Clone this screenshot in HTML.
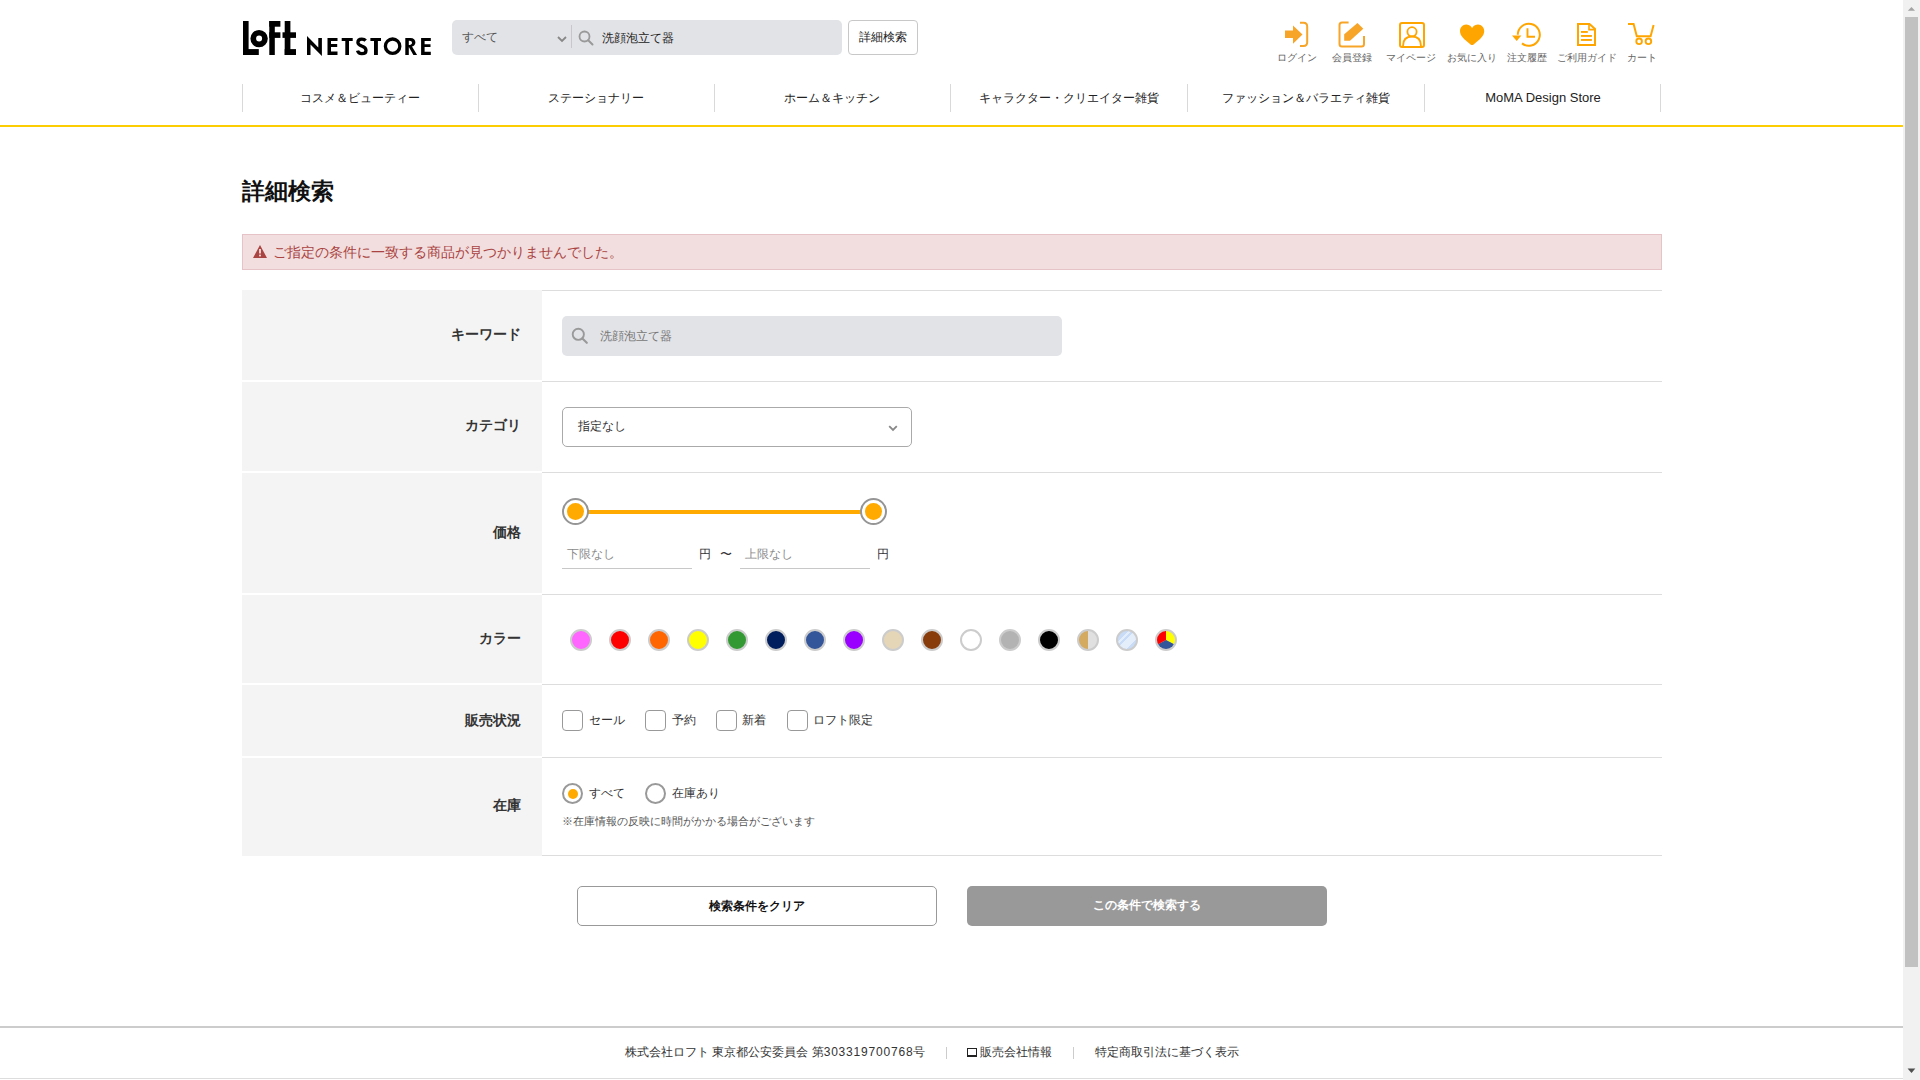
<!DOCTYPE html>
<html lang="ja">
<head>
<meta charset="utf-8">
<title>詳細検索 | ロフト公式通販サイト</title>
<style>
*{box-sizing:border-box;margin:0;padding:0}
html,body{width:1920px;height:1080px;overflow:hidden;background:#fff}
body{font-family:"Liberation Sans",sans-serif;color:#333;position:relative}
.a{position:absolute;white-space:nowrap}
/* scrollbar */
#sb{position:absolute;left:1903px;top:0;width:17px;height:1080px;background:#f1f1f1}
#sb .th{position:absolute;left:2px;top:17px;width:13px;height:950px;background:#c1c1c1}
/* header */
.srch{left:452px;top:20px;width:390px;height:35px;background:#e2e3e7;border-radius:5px}
.dbtn{left:848px;top:20px;width:70px;height:35px;border:1px solid #c8c8c8;border-radius:4px;background:#fff;font-size:12px;color:#222;text-align:center;line-height:33px}
.ic{color:#666;font-size:10px;line-height:12px;margin-top:1px}
.nav{top:84px;height:28px;width:1px;background:#d9d9d9}
.navt{top:90px;font-size:12px;line-height:16px;color:#222;text-align:center;width:236px}
.yl{left:0;top:125px;width:1903px;height:2px;background:#fdcd03}
/* main */
.ttl{left:242px;top:176px;font-size:23px;font-weight:bold;color:#111;line-height:30px}
.alert{left:242px;top:234px;width:1420px;height:36px;background:#f2dede;border:1px solid #e6c3c7}
.alert span{position:absolute;left:30px;top:9px;font-size:14px;line-height:16px;color:#a94442}
.thc{left:242px;width:300px;background:#f4f4f4}
.lbl{font-size:14px;font-weight:bold;color:#333;right:1399px;line-height:18px}
.ln{left:542px;width:1120px;height:1px;background:#ddd}
.fs{font-size:12px;line-height:14px;color:#333}
.sw{width:22px;height:22px;border-radius:50%;border:2px solid #ccc;top:629px}
.cb{width:21px;height:21px;border:1px solid #999;border-radius:4px;top:710px;background:#fff}
.rd{width:21px;height:21px;border:2px solid #999;border-radius:50%;top:783px;background:#fff}
.btn{top:886px;width:360px;height:40px;border-radius:5px;font-size:11.5px;font-weight:bold;text-align:center;line-height:39px}
.ft{top:1045px;font-size:12px;line-height:14px;color:#333}
</style>
</head>
<body>
<!-- HEADER -->
<svg class="a" style="left:0;top:0" width="440" height="64" viewBox="0 0 440 64">
  <g fill="#000">
    <!-- L -->
    <rect x="243" y="21" width="5.6" height="34"/>
    <rect x="243" y="49.1" width="15.8" height="5.9"/>
    <!-- o -->
    <path fill-rule="evenodd" d="M250.4 38.6a8.7 8.7 0 1 0 17.4 0a8.7 8.7 0 1 0 -17.4 0z M256.1 38.6a3 3 0 1 0 6 0a3 3 0 1 0 -6 0z"/>
    <!-- F -->
    <rect x="269.3" y="21" width="5.5" height="34"/>
    <rect x="269.3" y="21" width="11.1" height="5.7"/>
    <rect x="269.3" y="32.3" width="11.1" height="5.6"/>
    <!-- t -->
    <rect x="284.7" y="21" width="5.7" height="34"/>
    <rect x="282.5" y="32.3" width="13.5" height="5.6"/>
    <rect x="284.7" y="49.1" width="11.3" height="5.9"/>
    <!-- N -->
    <path d="M307 36.1 L310.5 39.5 L318.3 47.5 L318.3 37.9 L321.9 37.9 L321.9 56 L310.5 44.5 L310.5 54.9 L307 54.9 Z"/>
    <!-- E -->
    <path d="M327.5 37.9 H337.5 V41.1 H331 V44.1 H337.2 V47.1 H331 V51.6 H337.5 V54.9 H327.5 Z"/>
    <!-- T -->
    <path d="M341.7 37.9 H352.7 V41.1 H349 V54.9 H345.3 V41.1 H341.7 Z"/>
    <!-- S -->
    <path fill="none" stroke="#000" stroke-width="3.3" d="M365.6 40.6 C364.8 39.6 363.4 39.2 361.8 39.2 C359.4 39.2 357.9 40.6 357.9 42.4 C357.9 44.6 360.2 45.3 362.3 46.2 C364.6 47.1 366 48.3 366 50.4 C366 52.4 364.3 53.6 361.8 53.6 C359.5 53.6 358 52.3 357.5 50.6"/>
    <!-- T -->
    <path d="M370.4 37.9 H381 V41.1 H377.9 V54.9 H374 V41.1 H370.4 Z"/>
    <!-- O -->
    <circle cx="392.6" cy="46.2" r="7.2" fill="none" stroke="#000" stroke-width="3.3"/>
    <!-- R -->
    <path d="M405.3 37.9 H410.5 C413.6 37.9 415.4 39.9 415.4 42.3 C415.4 44.4 414.2 46 412 46.6 L417.1 54.9 H413.4 L409 47.3 H408.8 V54.9 H405.3 Z M408.8 40.8 V44.9 H409.6 C411 44.9 412 44.2 412 42.8 C412 41.5 411 40.8 409.6 40.8 Z"/>
    <!-- E -->
    <path d="M421.1 37.9 H430.8 V41 H424.6 V44.3 H430.5 V46.9 H424.6 V51.7 H430.8 V54.9 H421.1 Z"/>
  </g>
</svg>

<div class="a srch"></div>
<div class="a" style="left:462px;top:30px;font-size:12px;line-height:14px;color:#555">すべて</div>
<svg class="a" style="left:556px;top:35px" width="12" height="9" viewBox="0 0 12 9"><path d="M2 2 L6 6 L10 2" fill="none" stroke="#888" stroke-width="1.8"/></svg>
<div class="a" style="left:571px;top:25px;width:1px;height:23px;background:#c8c8cc"></div>
<svg class="a" style="left:578px;top:30px" width="16" height="16" viewBox="0 0 16 16"><circle cx="6.5" cy="6.5" r="5" fill="none" stroke="#999" stroke-width="1.8"/><path d="M10.2 10.2 L14.5 14.5" stroke="#999" stroke-width="2" stroke-linecap="round"/></svg>
<div class="a" style="left:602px;top:31px;font-size:12px;line-height:14px;color:#222">洗顔泡立て器</div>
<div class="a dbtn">詳細検索</div>

<!-- header icons -->
<svg class="a" style="left:1270px;top:15px" width="400" height="36" viewBox="1270 15 400 36">
  <g fill="#f7a528">
    <path d="M1285 30.4 H1293 V25.4 L1302.5 34.4 L1293 43.75 V37.9 H1285 Z"/>
  </g>
  <path d="M1300 22.8 H1303.5 Q1307.2 22.8 1307.2 26.5 V42.2 Q1307.2 45.9 1303.5 45.9 H1300" fill="none" stroke="#f7a528" stroke-width="2"/>
  <path d="M1348.6 22.5 H1342 Q1339.5 22.5 1339.5 25 V44 Q1339.5 46.5 1342 46.5 H1361.5 Q1364 46.5 1364 44 V36" fill="none" stroke="#f7a528" stroke-width="2"/>
  <path d="M1344.2 34.2 L1357.5 22.9 L1363.3 28.75 L1350 40.8 H1344.2 Z" fill="#f7a528"/>
  <rect x="1400" y="23" width="24" height="24" rx="2" fill="none" stroke="#ffa500" stroke-width="2"/>
  <circle cx="1412" cy="31.8" r="4.6" fill="none" stroke="#ffa500" stroke-width="1.8"/>
  <path d="M1403 46 Q1403 36.5 1412 36.5 Q1421 36.5 1421 46" fill="none" stroke="#ffa500" stroke-width="1.8"/>
  <path d="M1472.1 27.9 C1470.5 25.3 1468 24.6 1466.2 24.6 C1462.6 24.6 1460 27.6 1460 31.2 C1460 35.6 1464 39.3 1470.6 44.4 Q1472.1 45.6 1473.6 44.4 C1480.2 39.3 1484.2 35.6 1484.2 31.2 C1484.2 27.6 1481.6 24.6 1478 24.6 C1476.2 24.6 1473.7 25.3 1472.1 27.9 Z" fill="#ffa500"/>
  <path d="M1517.8 34.8 A11 11 0 1 1 1522 43.4" fill="none" stroke="#ffa500" stroke-width="2"/>
  <path d="M1512 35.4 H1521.4 L1516.7 40.9 Z" fill="#ffa500"/>
  <path d="M1527.5 28.3 V36.7 H1535" fill="none" stroke="#ffa500" stroke-width="1.9"/>
  <path d="M1578 24 H1589.5 L1595 29 V45 H1578 Z" fill="none" stroke="#ffa500" stroke-width="2"/>
  <path d="M1589 24.5 V29.6 H1594" fill="none" stroke="#ffa500" stroke-width="1.6"/>
  <rect x="1581" y="31" width="6.8" height="1.9" fill="#ffa500"/>
  <rect x="1581" y="35" width="10.9" height="1.9" fill="#ffa500"/>
  <rect x="1581" y="39" width="10.9" height="1.9" fill="#ffa500"/>
  <path d="M1628 24 H1633.6 L1636.8 36.3 H1650.6 L1653.6 25" fill="none" stroke="#ffa500" stroke-width="2"/>
  <circle cx="1639.1" cy="41.3" r="2.8" fill="none" stroke="#ffa500" stroke-width="1.9"/>
  <circle cx="1648.4" cy="41.3" r="2.8" fill="none" stroke="#ffa500" stroke-width="1.9"/>
</svg>
<div class="a ic" style="left:1277px;top:51px">ログイン</div>
<div class="a ic" style="left:1332px;top:51px">会員登録</div>
<div class="a ic" style="left:1386px;top:51px">マイページ</div>
<div class="a ic" style="left:1447px;top:51px">お気に入り</div>
<div class="a ic" style="left:1507px;top:51px">注文履歴</div>
<div class="a ic" style="left:1557px;top:51px">ご利用ガイド</div>
<div class="a ic" style="left:1627px;top:51px">カート</div>

<!-- nav -->
<div class="a nav" style="left:242px"></div>
<div class="a nav" style="left:478px"></div>
<div class="a nav" style="left:714px"></div>
<div class="a nav" style="left:950px"></div>
<div class="a nav" style="left:1187px"></div>
<div class="a nav" style="left:1424px"></div>
<div class="a nav" style="left:1660px"></div>
<div class="a navt" style="left:242px">コスメ＆ビューティー</div>
<div class="a navt" style="left:478px">ステーショナリー</div>
<div class="a navt" style="left:714px">ホーム＆キッチン</div>
<div class="a navt" style="left:951px">キャラクター・クリエイター雑貨</div>
<div class="a navt" style="left:1188px">ファッション＆バラエティ雑貨</div>
<div class="a navt" style="left:1425px;top:90px;font-size:13px">MoMA Design Store</div>
<div class="a yl"></div>

<!-- MAIN -->
<div class="a ttl">詳細検索</div>
<div class="a alert">
  <svg style="position:absolute;left:9px;top:9px" width="16" height="15" viewBox="0 0 16 15"><path d="M8 1 L15 14 H1 Z" fill="#a94442"/><rect x="7.1" y="5" width="1.8" height="4.5" fill="#f2dede"/><rect x="7.1" y="10.6" width="1.8" height="1.8" fill="#f2dede"/></svg>
  <span>ご指定の条件に一致する商品が見つかりませんでした。</span>
</div>

<!-- table -->
<div class="a thc" style="top:290px;height:90px"></div>
<div class="a thc" style="top:382px;height:89px"></div>
<div class="a thc" style="top:473px;height:120px"></div>
<div class="a thc" style="top:595px;height:88px"></div>
<div class="a thc" style="top:685px;height:71px"></div>
<div class="a thc" style="top:758px;height:98px"></div>
<div class="a ln" style="top:290px"></div>
<div class="a ln" style="top:381px"></div>
<div class="a ln" style="top:472px"></div>
<div class="a ln" style="top:594px"></div>
<div class="a ln" style="top:684px"></div>
<div class="a ln" style="top:757px"></div>
<div class="a ln" style="top:855px"></div>

<div class="a lbl" style="top:325px">キーワード</div>
<div class="a lbl" style="top:416px">カテゴリ</div>
<div class="a lbl" style="top:523px">価格</div>
<div class="a lbl" style="top:629px">カラー</div>
<div class="a lbl" style="top:711px">販売状況</div>
<div class="a lbl" style="top:796px">在庫</div>

<!-- keyword -->
<div class="a" style="left:562px;top:316px;width:500px;height:40px;background:#e2e3e7;border-radius:5px"></div>
<svg class="a" style="left:571px;top:327px" width="18" height="18" viewBox="0 0 18 18"><circle cx="7.3" cy="7.3" r="5.6" fill="none" stroke="#999" stroke-width="1.9"/><path d="M11.4 11.4 L15.8 15.8" stroke="#999" stroke-width="2.1" stroke-linecap="round"/></svg>
<div class="a" style="left:600px;top:328px;font-size:12px;line-height:16px;color:#777">洗顔泡立て器</div>

<!-- category -->
<div class="a" style="left:562px;top:407px;width:350px;height:40px;border:1px solid #aaa;border-radius:5px;background:#fff"></div>
<div class="a fs" style="left:578px;top:419px">指定なし</div>
<svg class="a" style="left:887px;top:424px" width="12" height="9" viewBox="0 0 12 9"><path d="M2.2 2.2 L6 6 L9.8 2.2" fill="none" stroke="#888" stroke-width="1.8"/></svg>

<!-- price -->
<div class="a" style="left:575px;top:510px;width:298px;height:4px;background:#ffaa00"></div>
<div class="a" style="left:562px;top:498px;width:27px;height:27px;border-radius:50%;border:2.3px solid #959595;background:#fff"></div>
<div class="a" style="left:566.6px;top:502.6px;width:17.6px;height:17.6px;border-radius:50%;background:#ffaa00"></div>
<div class="a" style="left:860px;top:498px;width:27px;height:27px;border-radius:50%;border:2.3px solid #959595;background:#fff"></div>
<div class="a" style="left:864.6px;top:502.6px;width:17.6px;height:17.6px;border-radius:50%;background:#ffaa00"></div>
<div class="a" style="left:562px;top:568px;width:130px;height:1px;background:#c8c8c8"></div>
<div class="a" style="left:740px;top:568px;width:130px;height:1px;background:#c8c8c8"></div>
<div class="a" style="left:567px;top:546px;font-size:12px;line-height:16px;color:#8a8a8a">下限なし</div>
<div class="a" style="left:745px;top:546px;font-size:12px;line-height:16px;color:#8a8a8a">上限なし</div>
<div class="a fs" style="left:699px;top:547px;font-size:12px">円</div>
<div class="a fs" style="left:720px;top:547px;font-size:12px">〜</div>
<div class="a fs" style="left:877px;top:547px;font-size:12px">円</div>

<!-- colors -->
<div class="a sw" style="left:570px;background:#ff66ff"></div>
<div class="a sw" style="left:609px;background:#ff0000"></div>
<div class="a sw" style="left:648px;background:#ff6600"></div>
<div class="a sw" style="left:687px;background:#ffff00"></div>
<div class="a sw" style="left:726px;background:#339933"></div>
<div class="a sw" style="left:765px;background:#001e5e"></div>
<div class="a sw" style="left:804px;background:#335599"></div>
<div class="a sw" style="left:843px;background:#9900ff"></div>
<div class="a sw" style="left:882px;background:#e6d6b8"></div>
<div class="a sw" style="left:921px;background:#883c0c"></div>
<div class="a sw" style="left:960px;background:#ffffff"></div>
<div class="a sw" style="left:999px;background:#b3b3b3"></div>
<div class="a sw" style="left:1038px;background:#000000"></div>
<div class="a sw" style="left:1077px;background:linear-gradient(90deg,#d4a960 50%,#e0e0e0 50%)"></div>
<div class="a sw" style="left:1116px;background:linear-gradient(135deg,#c8dcf8 0%,#c8dcf8 30%,#e4eefb 30%,#e4eefb 37%,#c8dcf8 37%,#c8dcf8 45%,#e4eefb 45%,#e4eefb 74%,#c8dcf8 74%)"></div>
<div class="a sw" style="left:1155px;background:#ccc;overflow:hidden"><svg style="position:absolute;left:0;top:0" width="18" height="18" viewBox="0 0 18 18"><path d="M9 9 L9 -2 A11 11 0 0 1 18.8 14.1 Z" fill="#ffff00"/><path d="M9 9 L18.8 14.1 A11 11 0 0 1 -0.8 14.1 Z" fill="#335599"/><path d="M9 9 L-0.8 14.1 A11 11 0 0 1 9 -2 Z" fill="#ff0000"/></svg></div>

<!-- sales status -->
<div class="a cb" style="left:562px"></div>
<div class="a fs" style="left:589px;top:713px">セール</div>
<div class="a cb" style="left:645px"></div>
<div class="a fs" style="left:672px;top:713px">予約</div>
<div class="a cb" style="left:716px"></div>
<div class="a fs" style="left:742px;top:713px">新着</div>
<div class="a cb" style="left:787px"></div>
<div class="a fs" style="left:813px;top:713px">ロフト限定</div>

<!-- stock -->
<div class="a rd" style="left:562px"></div>
<div class="a" style="left:568px;top:789px;width:10px;height:10px;border-radius:50%;background:#ffaa00"></div>
<div class="a fs" style="left:589px;top:786px">すべて</div>
<div class="a rd" style="left:645px"></div>
<div class="a fs" style="left:672px;top:786px">在庫あり</div>
<div class="a" style="left:562px;top:815px;font-size:11px;line-height:13px;color:#555">※在庫情報の反映に時間がかかる場合がございます</div>

<!-- buttons -->
<div class="a btn" style="left:577px;border:1px solid #999;background:#fff;color:#111">検索条件をクリア</div>
<div class="a btn" style="left:967px;background:#999;color:#fff">この条件で検索する</div>

<!-- footer -->
<div class="a" style="left:0;top:1026px;width:1903px;height:2px;background:#ccc"></div>
<div class="a" style="left:0;top:1078px;width:1903px;height:1px;background:#ddd"></div>
<div class="a ft" style="left:625px">株式会社ロフト 東京都公安委員会 第<span style="letter-spacing:0.8px">303319700768</span>号</div>
<div class="a" style="left:946px;top:1047px;width:1px;height:12px;background:#ccc"></div>
<div class="a" style="left:967px;top:1048px;width:9.5px;height:9px;border:1.6px solid #222;border-bottom-width:2.4px"></div>
<div class="a ft" style="left:980px">販売会社情報</div>
<div class="a" style="left:1073px;top:1047px;width:1px;height:12px;background:#ccc"></div>
<div class="a ft" style="left:1095px">特定商取引法に基づく表示</div>

<!-- scrollbar -->
<div id="sb">
  <svg style="position:absolute;left:0;top:0" width="17" height="17" viewBox="0 0 17 17"><path d="M4.8 10.8 L8.5 6.9 L12 10.8 Z" fill="#a3a3a3"/></svg>
  <div class="th"></div>
  <svg style="position:absolute;left:0;top:1063px" width="17" height="17" viewBox="0 0 17 17"><path d="M4.6 5.6 L8.5 10 L12.3 5.6 Z" fill="#505050"/></svg>
</div>
</body>
</html>
